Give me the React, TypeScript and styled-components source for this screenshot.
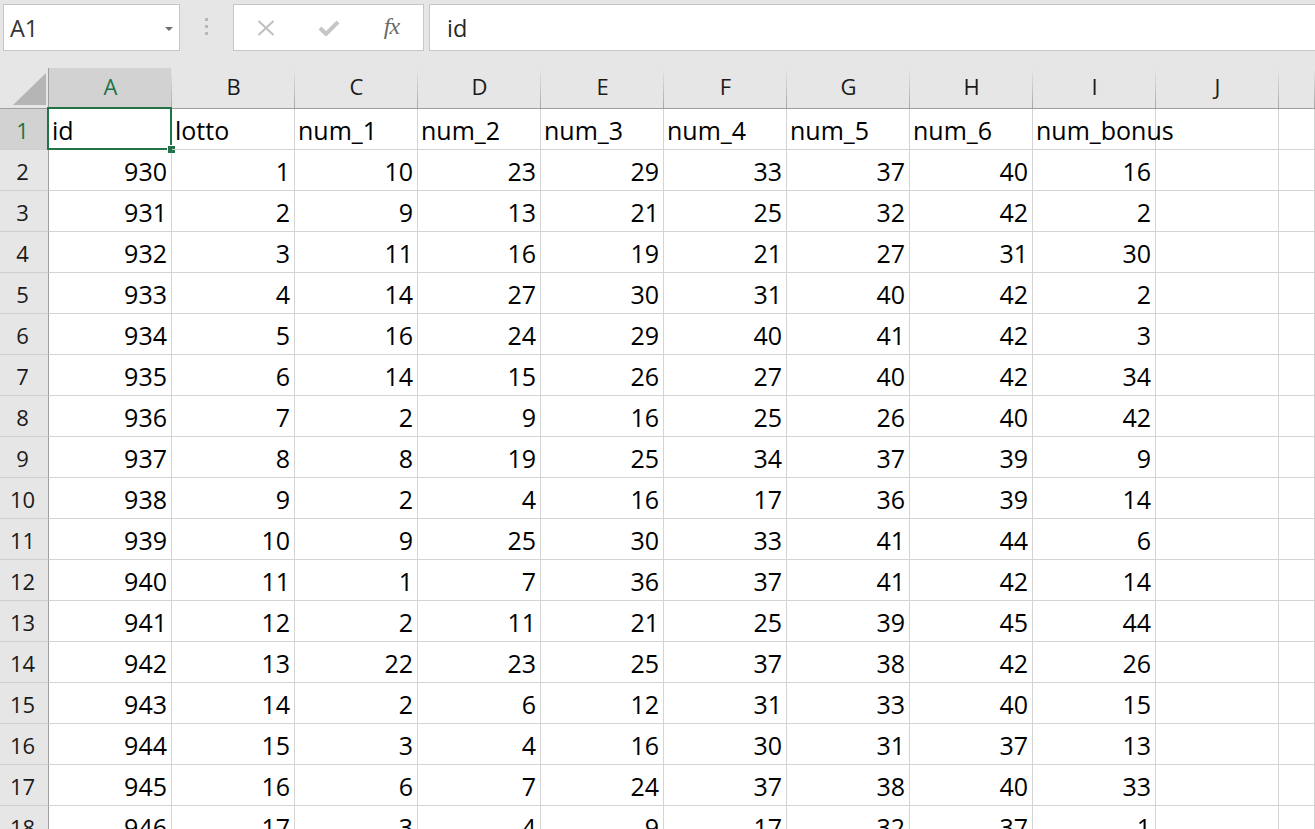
import styled, { createGlobalStyle } from 'styled-components';

const GlobalStyle = createGlobalStyle`
    html, body {
        margin: 0;
        padding: 0;
        width: 1315px;
        height: 829px;
        overflow: hidden;
        background: #ffffff;
        font-family: 'Open Sans', 'Noto Sans', sans-serif;
    }
`;

const Page = styled.div`
    display: flex;
    flex-direction: column;
    width: 1315px;
    height: 829px;
    overflow: hidden;
`;

const Toolbar = styled.div`
    height: 68px;
    flex-shrink: 0;
    background: #e6e6e6;
    display: flex;
    align-items: flex-start;
    padding: 4px 0 0 3px;
    box-sizing: border-box;
`;

const FieldBox = styled.div`
    height: 47px;
    box-sizing: border-box;
    background: #ffffff;
    border: 1px solid #c6c6c6;
    display: flex;
    align-items: center;
`;

const NameBox = styled(FieldBox)`
    width: 177px;
    padding: 0 6px 0 6px;
    justify-content: space-between;
    font-size: 23.5px;
    color: #333333;
`;

const DropArrow = styled.span`
    width: 0;
    height: 0;
    border-left: 4px solid transparent;
    border-right: 4px solid transparent;
    border-top: 4px solid #6f6f6f;
    margin-top: 2px;
`;

const Grip = styled.div`
    width: 53px;
    height: 47px;
    display: flex;
    flex-direction: column;
    align-items: center;
    justify-content: center;
    gap: 4px;
    padding-bottom: 2px;
    box-sizing: border-box;
`;

const GripDot = styled.span`
    width: 3px;
    height: 3px;
    background: #b8b8b8;
`;

const ButtonBox = styled(FieldBox)`
    width: 191px;
`;

const FxButton = styled.div`
    width: 63px;
    height: 100%;
    display: flex;
    align-items: center;
    justify-content: center;
`;

const FxLabel = styled.span`
    font-family: 'Liberation Serif', 'DejaVu Serif', serif;
    font-style: italic;
    font-size: 24px;
    color: #6a6a6a;
    letter-spacing: -1px;
    margin-top: -2px;
`;

const FormulaInput = styled(FieldBox)`
    flex: 1;
    margin-left: 5px;
    margin-right: -4px;
    padding-left: 17px;
    font-size: 23.5px;
    color: #262626;
`;

const Sheet = styled.div`
    flex: 1;
    display: grid;
    grid-template-columns: 49px repeat(10, 123px) 1fr;
    grid-auto-rows: 41px;
    overflow: hidden;
    background: #ffffff;
`;

const Corner = styled.div`
    position: relative;
    background: #e6e6e6;
    border-right: 1px solid #9f9f9f;
    border-bottom: 1px solid #9f9f9f;
    box-sizing: border-box;
    &::after {
        content: '';
        position: absolute;
        right: 2px;
        bottom: 3px;
        width: 33px;
        height: 32px;
        background: #b5b5b5;
        clip-path: polygon(100% 0, 100% 100%, 0 100%);
    }
`;

type HeadProps = {
    readonly $active?: boolean
}

const ColHead = styled.div<HeadProps>`
    position: relative;
    background: ${({ $active }) => $active ? '#d2d2d2' : '#e6e6e6'};
    color: ${({ $active }) => $active ? '#217346' : '#1a1a1a'};
    border-bottom: 1px solid #9f9f9f;
    box-sizing: border-box;
    display: flex;
    align-items: center;
    justify-content: center;
    font-size: 22px;
    padding-bottom: 4px;
    &::after {
        content: '';
        position: absolute;
        top: 0;
        right: 0;
        bottom: 0;
        width: 1px;
        background: linear-gradient(to bottom, #e6e6e6, #a8a8a8);
    }
`;

const RowHead = styled.div<HeadProps>`
    background: ${({ $active }) => $active ? '#d2d2d2' : '#e6e6e6'};
    color: ${({ $active }) => $active ? '#217346' : '#1a1a1a'};
    border-right: 1px solid #9f9f9f;
    border-bottom: 1px solid #cfcfcf;
    box-sizing: border-box;
    display: flex;
    align-items: center;
    justify-content: center;
    font-size: 22px;
    padding: 1px 3px 0 0;
`;

type CellProps = {
    readonly $num?: boolean
}

const Cell = styled.div<CellProps>`
    position: relative;
    border-right: 1px solid #d4d4d4;
    border-bottom: 1px solid #d4d4d4;
    box-sizing: border-box;
    display: flex;
    align-items: center;
    justify-content: ${({ $num }) => $num ? 'flex-end' : 'flex-start'};
    padding: 2px ${({ $num }) => $num ? '4px' : '0'} 0 ${({ $num }) => $num ? '0' : '3px'};
    font-size: 25px;
    color: #000000;
    white-space: nowrap;
    overflow: visible;
    z-index: ${({ $num }) => $num ? 0 : 1};
`;

const Selection = styled.div`
    position: absolute;
    top: -2px;
    left: -2px;
    right: -1px;
    bottom: -1px;
    border: 2px solid #217346;
    pointer-events: none;
    z-index: 2;
`;

const Handle = styled.span`
    position: absolute;
    right: -5px;
    bottom: -5px;
    width: 7px;
    height: 7px;
    background: #217346;
    border-left: 1px solid #ffffff;
    border-top: 1px solid #ffffff;
`;

const columns = ['A', 'B', 'C', 'D', 'E', 'F', 'G', 'H', 'I', 'J', ''];
const headers = ['id', 'lotto', 'num_1', 'num_2', 'num_3', 'num_4', 'num_5', 'num_6', 'num_bonus'];

const rows = [
    [930, 1, 10, 23, 29, 33, 37, 40, 16],
    [931, 2, 9, 13, 21, 25, 32, 42, 2],
    [932, 3, 11, 16, 19, 21, 27, 31, 30],
    [933, 4, 14, 27, 30, 31, 40, 42, 2],
    [934, 5, 16, 24, 29, 40, 41, 42, 3],
    [935, 6, 14, 15, 26, 27, 40, 42, 34],
    [936, 7, 2, 9, 16, 25, 26, 40, 42],
    [937, 8, 8, 19, 25, 34, 37, 39, 9],
    [938, 9, 2, 4, 16, 17, 36, 39, 14],
    [939, 10, 9, 25, 30, 33, 41, 44, 6],
    [940, 11, 1, 7, 36, 37, 41, 42, 14],
    [941, 12, 2, 11, 21, 25, 39, 45, 44],
    [942, 13, 22, 23, 25, 37, 38, 42, 26],
    [943, 14, 2, 6, 12, 31, 33, 40, 15],
    [944, 15, 3, 4, 16, 30, 31, 37, 13],
    [945, 16, 6, 7, 24, 37, 38, 40, 33],
    [946, 17, 3, 4, 9, 17, 32, 37, 1],
];

const CancelIcon = () => (
    <svg width='18' height='16' viewBox='0 0 18 16'>
        <path d='M1.5 1 L16.5 15 M16.5 1 L1.5 15' stroke='#bfbfbf' strokeWidth='2' fill='none' />
    </svg>
);

const ConfirmIcon = () => (
    <svg width='22' height='16' viewBox='0 0 22 16'>
        <path d='M2 8 L8 14 L20 2' stroke='#c6c6c6' strokeWidth='4' fill='none' />
    </svg>
);

export default function App() {
    return (
        <Page>
            <GlobalStyle />
            <Toolbar>
                <NameBox>
                    A1
                    <DropArrow />
                </NameBox>
                <Grip>
                    <GripDot />
                    <GripDot />
                    <GripDot />
                </Grip>
                <ButtonBox>
                    <FxButton><CancelIcon /></FxButton>
                    <FxButton><ConfirmIcon /></FxButton>
                    <FxButton><FxLabel>fx</FxLabel></FxButton>
                </ButtonBox>
                <FormulaInput>id</FormulaInput>
            </Toolbar>
            <Sheet>
                <Corner />
                {columns.map((c, i) => <ColHead key={'h' + i} $active={c === 'A'}>{c}</ColHead>)}

                <RowHead $active>1</RowHead>
                {columns.map((_, i) => (
                    <Cell key={'r1-' + i}>
                        {headers[i] ?? ''}
                        {i === 0 && <Selection><Handle /></Selection>}
                    </Cell>
                ))}

                {rows.map((r, ri) => [
                    <RowHead key={'rh' + ri}>{ri + 2}</RowHead>,
                    ...columns.map((_, ci) => (
                        <Cell key={ri + '-' + ci} $num>{r[ci] ?? ''}</Cell>
                    )),
                ])}
            </Sheet>
        </Page>
    );
}
